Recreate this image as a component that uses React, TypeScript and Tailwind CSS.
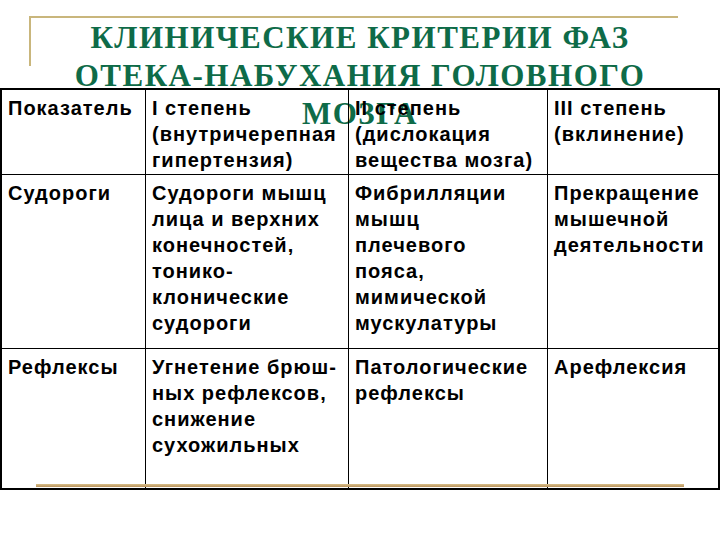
const HEADER = [
  ['Показатель'],
  ['I степень', '(внутричерепная', 'гипертензия)'],
  ['II степень', '(дислокация', 'вещества мозга)'],
  ['III степень', '(вклинение)'],
];

const ROWS = [
  [
    ['Судороги'],
    ['Судороги мышц', 'лица и верхних', 'конечностей,', 'тонико-', 'клонические', 'судороги'],
    ['Фибрилляции', 'мышц', 'плечевого', 'пояса,', 'мимической', 'мускулатуры'],
    ['Прекращение', 'мышечной', 'деятельности'],
  ],
  [
    ['Рефлексы'],
    ['Угнетение брюш-', 'ных рефлексов,', 'снижение', 'сухожильных'],
    ['Патологические', 'рефлексы'],
    ['Арефлексия'],
  ],
];

function Cell({ lines, last, bottom }: { lines: string[]; last: boolean; bottom: boolean }) {
  return (
    <div
      className={`px-[6px] pt-[5px] ${last ? '' : 'border-r border-black'} ${bottom ? '' : 'border-b border-black'}`}
    >
      {lines.map((l) => (
        <div key={l} className="whitespace-nowrap">
          {l}
        </div>
      ))}
    </div>
  );
}

export default function App() {
  const all = [HEADER, ...ROWS];
  return (
    <div className="relative w-[720px] h-[540px] bg-white overflow-hidden">
      {/* decorative gold corner frame */}
      <div className="absolute left-[29px] top-[16px] w-[649px] h-[50px] border-t-2 border-l-2 border-[#c9b67c]" />

      {/* Title */}
      <div
        className="h-[88px] pt-[19px] text-center text-[31px] leading-[38px] font-bold tracking-[1.5px] text-[#0e6b48] whitespace-nowrap"
        style={{ fontFamily: '"Liberation Serif", serif' }}
      >
        <div>КЛИНИЧЕСКИЕ КРИТЕРИИ ФАЗ</div>
        <div>ОТЕКА-НАБУХАНИЯ ГОЛОВНОГО</div>
        <div>МОЗГА</div>
      </div>

      {/* Table */}
      <div
        className="grid grid-cols-[144px_203px_199px_1fr] grid-rows-[85px_174px_1fr] h-[402px] border-2 border-black text-[20px] leading-[26px] font-bold tracking-[1px] text-black"
        style={{ fontFamily: '"Liberation Sans", Arial, sans-serif' }}
      >
        {all.map((row, ri) =>
          row.map((lines, ci) => (
            <Cell key={`${ri}-${ci}`} lines={lines} last={ci === 3} bottom={ri === all.length - 1} />
          )),
        )}
      </div>

      {/* bottom gold rule lying over the table */}
      <div className="absolute left-[36px] top-[484px] w-[648px] h-[3px] bg-gradient-to-b from-[#d8bf8a] to-[#b8925c]" />
    </div>
  );
}
